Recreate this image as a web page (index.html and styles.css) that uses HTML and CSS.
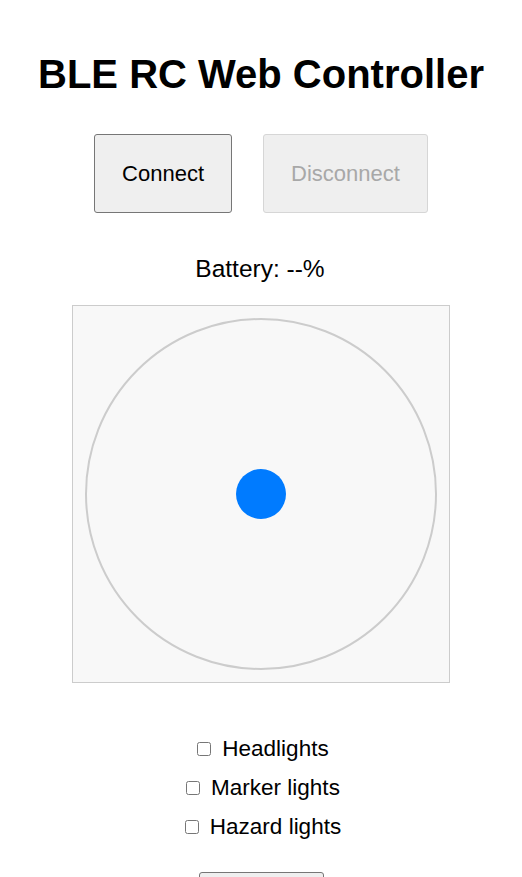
FILE: index.html
```html
<!DOCTYPE html>
<html lang="en">
<head>
<meta charset="utf-8">
<title>BLE RC Web Controller</title>
<link rel="stylesheet" href="styles.css">
</head>
<body>
<main class="app">
  <h1 class="title">BLE RC Web Controller</h1>
  <div class="actions">
    <button class="btn" type="button">Connect</button>
    <button class="btn" type="button" disabled>Disconnect</button>
  </div>
  <p class="battery">Battery: --%</p>
  <div class="joystick">
    <div class="ring">
      <div class="knob"></div>
    </div>
  </div>
  <div class="toggles">
    <label class="toggle"><input type="checkbox" class="check"><span>Headlights</span></label>
    <label class="toggle"><input type="checkbox" class="check"><span>Marker lights</span></label>
    <label class="toggle"><input type="checkbox" class="check"><span>Hazard lights</span></label>
  </div>
  <button class="btn btn-horn" type="button">Horn</button>
</main>
</body>
</html>
```
FILE: styles.css
```css
* { box-sizing: border-box; }
html, body { margin: 0; padding: 0; background: #ffffff; }
body {
  font-family: "Liberation Sans", Arial, sans-serif;
  color: #000;
}
.app {
  display: flex;
  flex-direction: column;
  align-items: center;
  padding-top: 51px;
}
.title {
  margin: 0;
  font-size: 40px;
  font-weight: bold;
  line-height: 46px;
}
.actions {
  display: flex;
  gap: 31px;
  margin-top: 37px;
}
.btn {
  font-family: "Liberation Sans", Arial, sans-serif;
  font-size: 22px;
  line-height: 25px;
  padding: 26px 27px;
  background: #efefef;
  color: #000;
  border: 1px solid #767676;
  border-radius: 3px;
}
.btn:disabled {
  background: #efefef;
  color: #a8a8a8;
  border-color: #d6d6d6;
  padding: 26px 27px;
}
.battery {
  margin: 42px 0 0;
  font-size: 24.5px;
  line-height: 28px;
  padding-right: 2px;
}
.joystick {
  margin-top: 22px;
  width: 378px;
  height: 378px;
  background: #f8f8f8;
  border: 1px solid #cccccc;
  display: flex;
  align-items: center;
  justify-content: center;
}
.ring {
  width: 352px;
  height: 352px;
  border: 2px solid #cccccc;
  border-radius: 50%;
  display: flex;
  align-items: center;
  justify-content: center;
}
.knob {
  width: 50px;
  height: 50px;
  border-radius: 50%;
  background: #007bff;
}
.toggles {
  margin-top: 53px;
  display: flex;
  flex-direction: column;
  align-items: center;
  gap: 14px;
}
.toggle {
  display: flex;
  align-items: center;
  font-size: 22.5px;
  line-height: 25px;
  padding-left: 4px;
}
.check {
  width: 14px;
  height: 14px;
  margin: 0 11px 0 0;
}
.btn-horn {
  margin-top: 33px;
  width: 125px;
  padding: 26px 0;
}
```
